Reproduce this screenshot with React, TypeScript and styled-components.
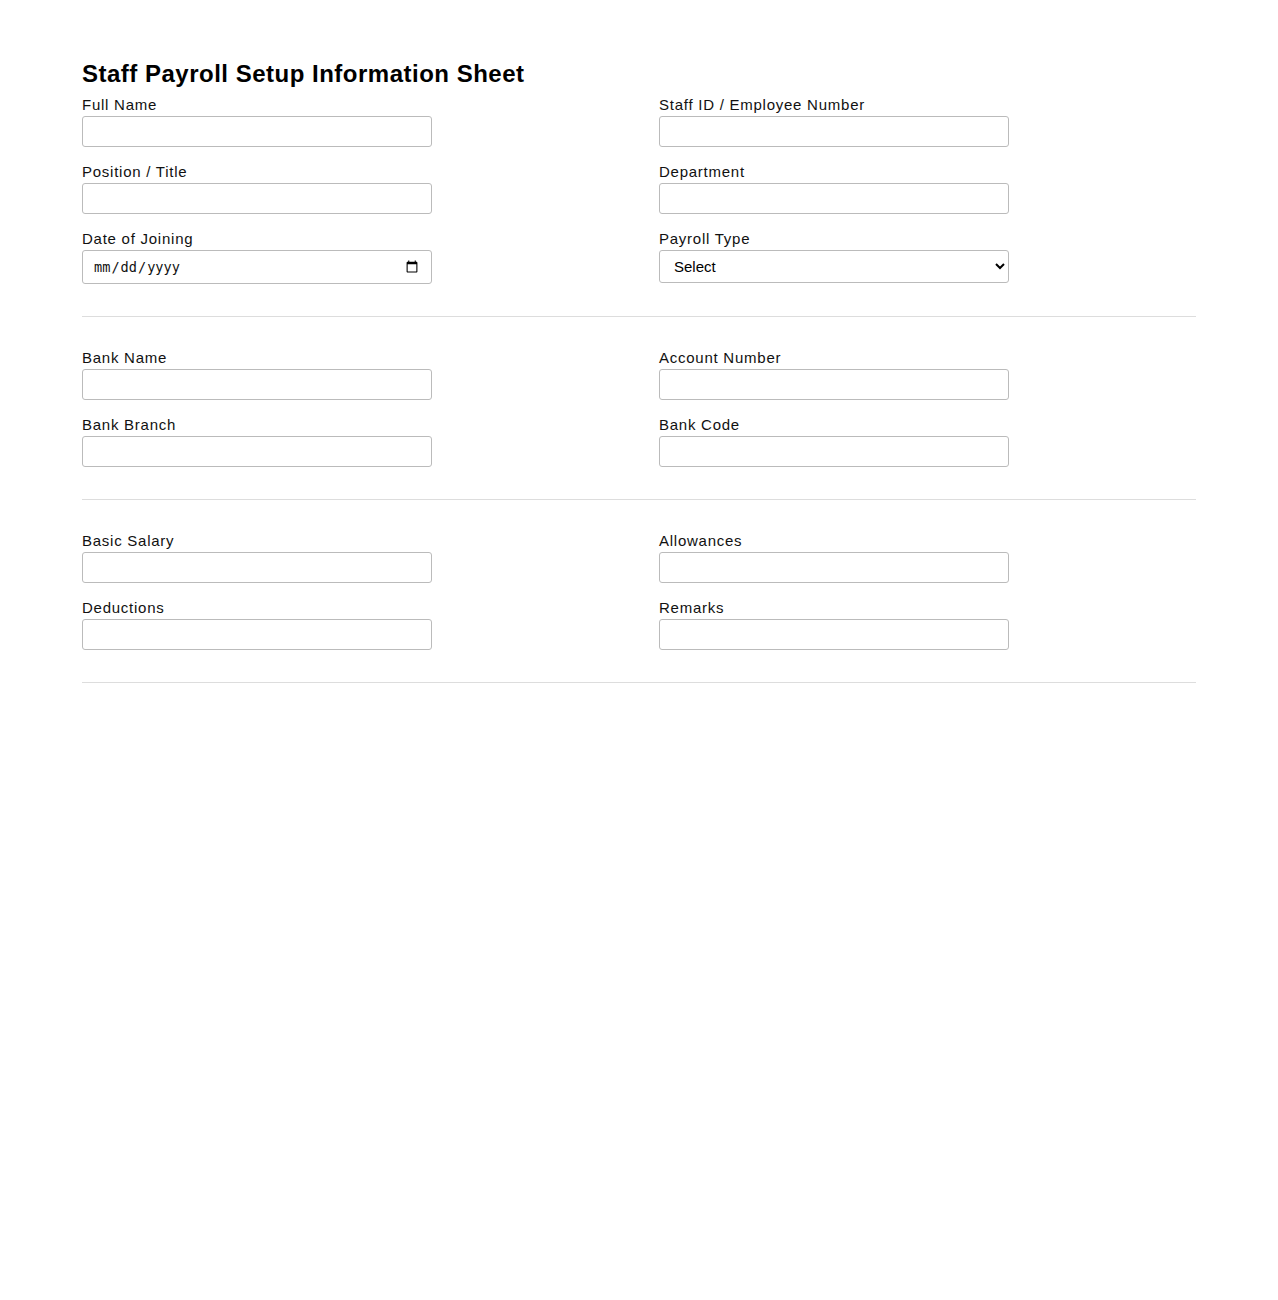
import React from "react";
import styled, { createGlobalStyle } from "styled-components";

const Global = createGlobalStyle`
  html, body { margin: 0; padding: 0; background: #fff; }
  body { font-family: "Liberation Sans", Arial, sans-serif; color: #111; }
  * { box-sizing: border-box; }
`;

const Page = styled.div`
  padding: 60px 82px 40px;
`;

const Title = styled.h1`
  margin: 0 0 7px;
  font-size: 24px;
  line-height: 28px;
  font-weight: 700;
  color: #000;
  letter-spacing: 0.5px;
`;

const Section = styled.section`
  display: grid;
  grid-template-columns: 1fr 1fr;
  column-gap: 40px;
  row-gap: 15px;
  padding-bottom: 32px;
  border-bottom: 1px solid #ddd;
  margin-bottom: 31px;
`;

const Field = styled.div`
  display: flex;
  flex-direction: column;
  align-items: flex-start;
`;

const Label = styled.label`
  display: block;
  font-size: 15px;
  line-height: 17px;
  letter-spacing: 0.75px;
  color: #111;
  padding-top: 1px;
  margin-bottom: 3px;
`;

const Input = styled.input`
  width: 350px;
  height: 31px;
  border: 1px solid #bbb;
  border-radius: 3px;
  padding: 0 8px;
  font-family: "Liberation Sans", Arial, sans-serif;
  font-size: 15px;
  background: #fff;
  &[type="date"] {
    height: 34px;
    padding: 0 10px;
    font-family: "DejaVu Sans Mono", monospace;
    font-size: 13.6px;
    color: #111;
  }
`;

const Select = styled.select`
  width: 350px;
  height: 33px;
  border: 1px solid #bbb;
  border-radius: 3px;
  padding: 0 10px;
  font-family: "Liberation Sans", Arial, sans-serif;
  font-size: 15px;
  color: #000;
  background: #fff;
`;

type F = { label: string; kind?: "text" | "date" | "select" };

const sections: F[][] = [
  [
    { label: "Full Name" },
    { label: "Staff ID / Employee Number" },
    { label: "Position / Title" },
    { label: "Department" },
    { label: "Date of Joining", kind: "date" },
    { label: "Payroll Type", kind: "select" },
  ],
  [
    { label: "Bank Name" },
    { label: "Account Number" },
    { label: "Bank Branch" },
    { label: "Bank Code" },
  ],
  [
    { label: "Basic Salary" },
    { label: "Allowances" },
    { label: "Deductions" },
    { label: "Remarks" },
  ],
];

export default function App() {
  return (
    <Page>
      <Global />
      <Title>Staff Payroll Setup Information Sheet</Title>
      {sections.map((s, i) => (
        <Section key={i}>
          {s.map((f) => (
            <Field key={f.label}>
              <Label>{f.label}</Label>
              {f.kind === "select" ? (
                <Select defaultValue="">
                  <option value="">Select</option>
                  <option>Monthly</option>
                  <option>Weekly</option>
                </Select>
              ) : f.kind === "date" ? (
                <Input type="date" />
              ) : (
                <Input type="text" />
              )}
            </Field>
          ))}
        </Section>
      ))}
    </Page>
  );
}
